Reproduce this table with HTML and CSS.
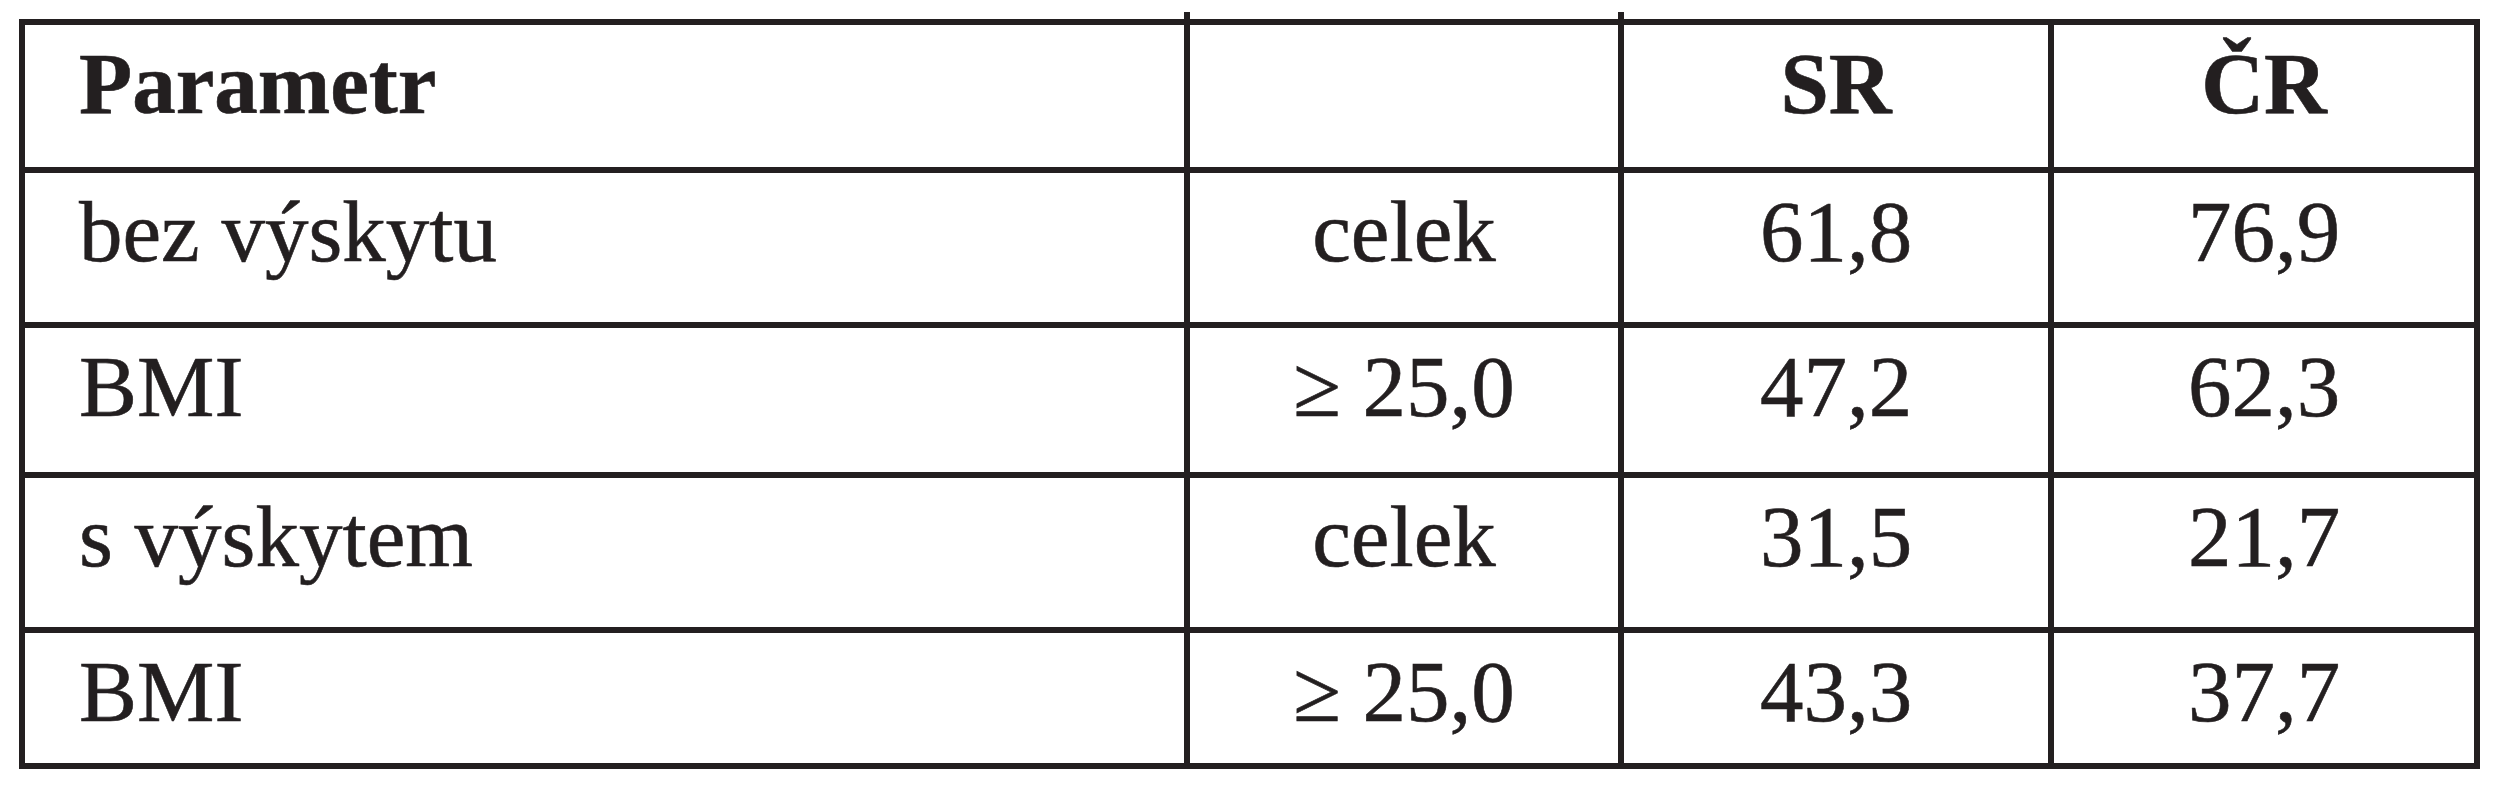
FILE: index.html
```html
<!DOCTYPE html>
<html lang="cs">
<head>
<meta charset="utf-8">
<title>Parametr</title>
<link rel="stylesheet" href="styles.css">
</head>
<body>
<table class="data">
  <colgroup>
    <col class="c1"><col class="c2"><col class="c3"><col class="c4">
  </colgroup>
  <tr class="r0">
    <th class="lbl">Parametr</th>
    <th class="mid stub"></th>
    <th class="mid stub">SR</th>
    <th class="mid">ČR</th>
  </tr>
  <tr class="r1">
    <td class="lbl">bez výskytu</td>
    <td class="mid">celek</td>
    <td class="mid">61,8</td>
    <td class="mid">76,9</td>
  </tr>
  <tr class="r2">
    <td class="lbl">BMI</td>
    <td class="mid">≥ 25,0</td>
    <td class="mid">47,2</td>
    <td class="mid">62,3</td>
  </tr>
  <tr class="r3">
    <td class="lbl">s výskytem</td>
    <td class="mid">celek</td>
    <td class="mid">31,5</td>
    <td class="mid">21,7</td>
  </tr>
  <tr class="r4">
    <td class="lbl">BMI</td>
    <td class="mid stubb">≥ 25,0</td>
    <td class="mid stubb">43,3</td>
    <td class="mid">37,7</td>
  </tr>
</table>
</body>
</html>
```
FILE: styles.css
```css
html, body {
  margin: 0;
  padding: 0;
  background: #ffffff;
}

body {
  padding: 19px 0 0 19px;
  font-family: "Liberation Serif", "Times New Roman", serif;
  color: #231f20;
}

.data {
  border-collapse: separate;
  border-spacing: 0;
  border-left: 6px solid #231f20;
  border-top: 6px solid #231f20;
  table-layout: fixed;
  width: 2461px;
}

.c1 { width: 1165px; }
.c2 { width: 434px; }
.c3 { width: 430px; }
.c4 { width: 426px; }

.data th,
.data td {
  border-right: 6px solid #231f20;
  border-bottom: 6px solid #231f20;
  padding: 8px 0 0 0;
  vertical-align: top;
  font-size: 87px;
  line-height: normal;
  white-space: nowrap;
  position: relative;
  -webkit-text-stroke: 0.6px #231f20;
}

.data th {
  font-weight: bold;
}

.lbl {
  text-align: left;
  padding-left: 54px !important;
}

.mid {
  text-align: center;
}

.r0 th { height: 134px; }
.r1 td { height: 141px; }
.r2 td { height: 136px; }
.r3 td { height: 141px; }
.r4 td { height: 122px; }

/* small overhangs of the inner vertical rules above and below the frame */
.stub::after {
  content: "";
  position: absolute;
  top: -13px;
  left: -6px;
  width: 6px;
  height: 7px;
  background: #231f20;
}

.stubb::after {
  content: "";
  position: absolute;
  bottom: -13px;
  left: -6px;
  width: 6px;
  height: 7px;
  background: #231f20;
}
```
